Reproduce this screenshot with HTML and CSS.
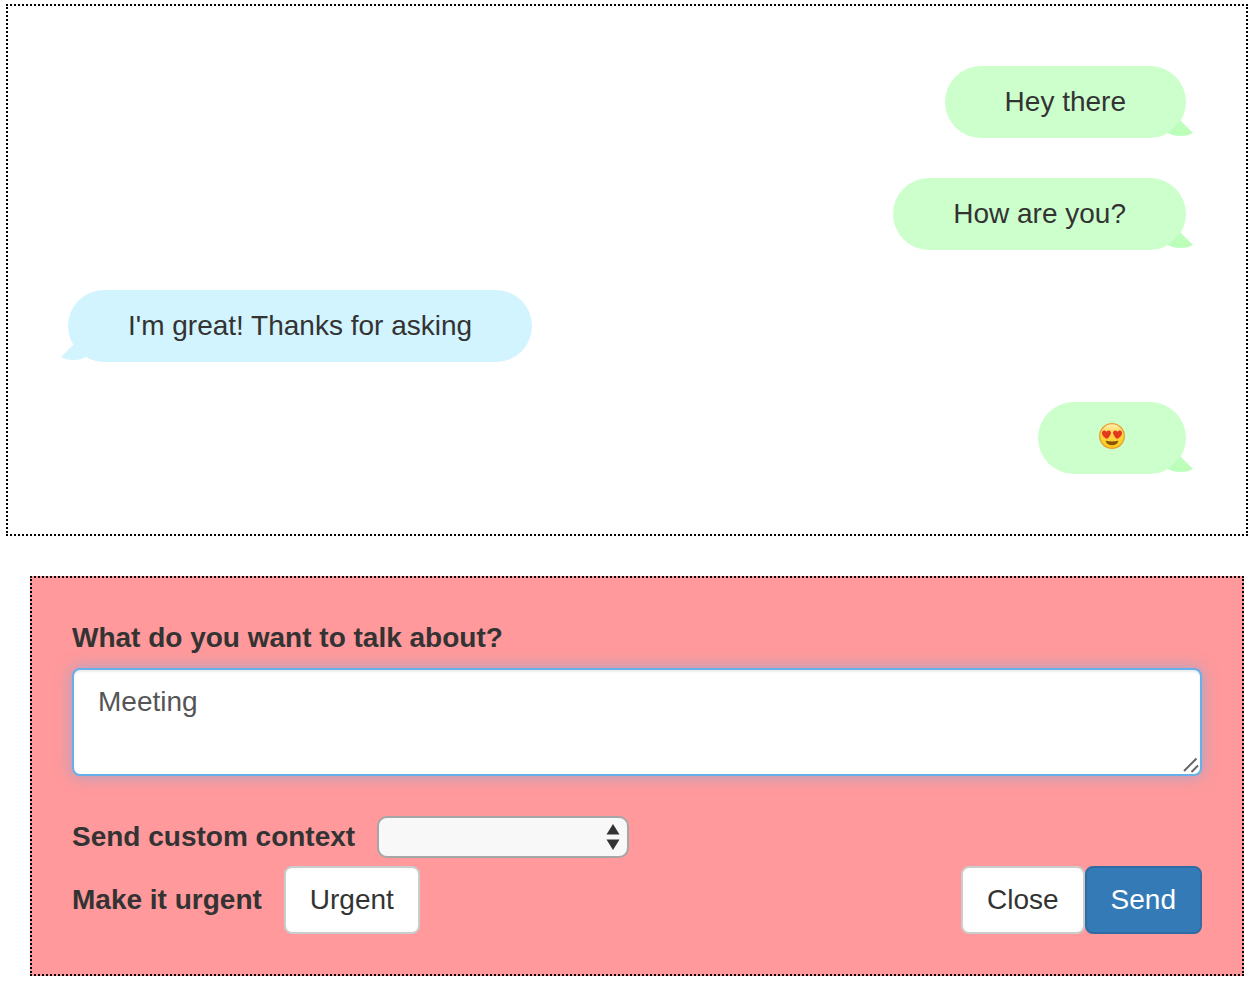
FILE: index.html
```html
<!DOCTYPE html>
<html lang="en">
<head>
<meta charset="utf-8">
<meta name="viewport" content="width=device-width, initial-scale=1">
<title>Chat</title>
<link rel="stylesheet" href="styles.css">
</head>
<body>
<main>
  <section class="chat" aria-label="Conversation">
    <div class="bubble bubble-sent">Hey there
      <svg class="tail" viewBox="0 0 26 17" aria-hidden="true"><path d="M13.5 0.5 26 13Q21 16 13.500 16Q6 16 1 13Z"/></svg>
    </div>
    <div class="bubble bubble-sent">How are you?
      <svg class="tail" viewBox="0 0 26 17" aria-hidden="true"><path d="M13.5 0.5 26 13Q21 16 13.500 16Q6 16 1 13Z"/></svg>
    </div>
    <div class="bubble bubble-received">I'm great! Thanks for asking
      <svg class="tail" viewBox="0 0 26 17" aria-hidden="true"><path d="M12.500 0.500 0 13Q5 16 12.500 16Q20 16 25 13Z"/></svg>
    </div>
    <div class="bubble bubble-sent">
      <svg class="emoji" viewBox="0 0 28 28" role="img" aria-label="Smiling face with heart eyes">
        <defs>
          <linearGradient id="face" x1="0" y1="0" x2="0" y2="1">
            <stop offset="0" stop-color="#fff0b8"/>
            <stop offset=".35" stop-color="#fdd956"/>
            <stop offset="1" stop-color="#ffcb12"/>
          </linearGradient>
        </defs>
        <circle cx="14" cy="14" r="12.300" fill="url(#face)" stroke="#ee9d2c" stroke-width="1.300"/>
        <path d="M8.900 17Q4.500 14.800 4 11.600C3.400 8.200 7.400 7.600 8.500 10C10.200 7.400 13.800 8.600 12.800 12Q11.800 14.800 8.900 17Z" fill="#e23a1d"/>
        <path d="M19.100 17Q23.500 14.800 24 11.600C24.600 8.200 20.600 7.600 19.500 10C17.800 7.400 14.200 8.600 15.200 12Q16.200 14.800 19.100 17Z" fill="#e23a1d"/>
        <path d="M7.600 18.800Q14 20.200 20.400 18.800Q19.300 23.200 14 23.200Q8.700 23.200 7.600 18.800Z" fill="#8a5208"/>
      </svg>
      <svg class="tail" viewBox="0 0 26 17" aria-hidden="true"><path d="M13.5 0.5 26 13Q21 16 13.500 16Q6 16 1 13Z"/></svg>
    </div>
  </section>

  <form class="compose">
    <label class="label topic-label" for="topic">What do you want to talk about?</label>
    <div class="topic">
      <textarea id="topic" class="topic-input">Meeting</textarea>
      <svg class="grip" viewBox="0 0 16 16" aria-hidden="true"><path d="M1 14 13.500 1.500M8.500 15 15 8.500"/></svg>
    </div>
    <div class="row">
      <label class="label" for="context">Send custom context</label>
      <div class="picker">
        <select id="context" class="picker-select"><option></option></select>
        <svg class="picker-arrows" viewBox="0 0 14 26" aria-hidden="true"><path d="M7 0 13.500 10.500H.5ZM.5 15.500h13L7 26Z"/></svg>
      </div>
    </div>
    <div class="row actions">
      <label class="label" for="urgent">Make it urgent</label>
      <button id="urgent" class="button" type="button">Urgent</button>
      <div class="submit">
        <button class="button" type="button">Close</button>
        <button class="button button-primary" type="submit">Send</button>
      </div>
    </div>
  </form>
</main>
</body>
</html>
```

FILE: styles.css
```css
* {
  box-sizing: border-box;
}

body {
  margin: 0;
  background: #fff;
  color: #333;
  font: 28px/40px "Liberation Sans", Arial, sans-serif;
}

main {
  padding: 4px 10px 10px 6px;
}

.chat {
  display: flex;
  flex-direction: column;
  gap: 40px;
  padding: 60px;
  border: 2px dotted #000;
}

.bubble {
  position: relative;
  padding: 16px 60px;
  border-radius: 36px;
}

.bubble-sent {
  align-self: flex-end;
  background: #cfc;
}

.bubble-received {
  align-self: flex-start;
  background: #d2f4ff;
}

.tail {
  position: absolute;
  bottom: 1px;
  width: 26px;
  height: 17px;
}

.bubble-sent .tail {
  right: -7px;
  fill: #bfb;
}

.bubble-received .tail {
  left: -7px;
  fill: #d2f4ff;
}

.emoji {
  display: block;
  width: 28px;
  height: 28px;
  margin: 4px 0 8px;
}

.compose {
  margin: 40px 4px 0 24px;
  padding: 40px;
  border: 2px dotted #000;
  background: #ff999b;
}

.label {
  font-weight: bold;
}

.topic-label {
  display: block;
  margin-bottom: 10px;
}

.topic {
  position: relative;
  margin-bottom: 40px;
}

.topic-input {
  display: block;
  width: 100%;
  height: 108px;
  padding: 12px 24px;
  border: 2px solid #66afe9;
  border-radius: 8px;
  outline: 0;
  background: #fff;
  box-shadow: inset 0 2px 2px rgba(0, 0, 0, .075), 0 0 16px rgba(102, 175, 233, .6);
  color: #555;
  font: inherit;
  resize: none;
}

.grip {
  position: absolute;
  right: 3px;
  bottom: 3px;
  width: 16px;
  height: 16px;
  fill: none;
  stroke: #666;
  stroke-width: 2;
  pointer-events: none;
}

.row {
  display: flex;
  align-items: center;
  gap: 22px;
}

.actions {
  margin-top: 8px;
}

.picker {
  position: relative;
  width: 252px;
}

.picker-select {
  display: block;
  width: 100%;
  height: 42px;
  padding: 0 36px 0 12px;
  border: 2px solid #a6a6a6;
  border-radius: 10px;
  appearance: none;
  background: #f8f8f8;
  color: #333;
  font: inherit;
}

.picker-arrows {
  position: absolute;
  top: 8px;
  right: 9px;
  width: 14px;
  height: 26px;
  fill: #333;
  pointer-events: none;
}

.button {
  padding: 12px 24px;
  border: 2px solid #ccc;
  border-radius: 8px;
  background: #fff;
  color: #333;
  font: inherit;
  cursor: pointer;
}

.button-primary {
  border-color: #2e6da4;
  background: #337ab7;
  color: #fff;
}

.submit {
  display: flex;
  margin-left: auto;
}
```
